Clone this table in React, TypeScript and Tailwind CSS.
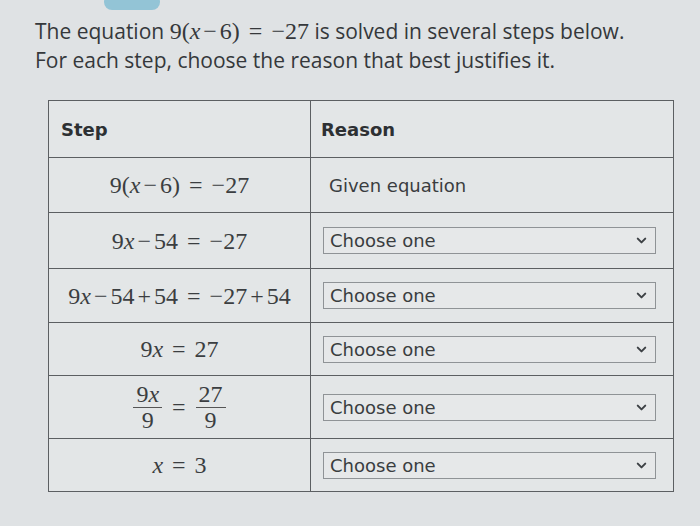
import { ChevronDown } from "lucide-react";

const serif = "font-['Liberation_Serif','Times_New_Roman',serif]";

const Choose = () => (
  <div className="flex h-[27px] w-[333px] items-center justify-between border border-[#8f9396] bg-[#e6e8e9] pl-[6px] pr-[6px] text-[18px] text-[#3a3d40]">
    <span>Choose one</span>
    <ChevronDown size={15} strokeWidth={3.2} className="text-[#3d4145]" />
  </div>
);

const X = () => <i className="italic">x</i>;
// binary operator with TeX-like spacing
const Op = ({ c }: { c: string }) => <span className="mx-[3px]">{c}</span>;
const Eq = () => <span className="mx-[9px]">=</span>;

const rows: { h: string; step: React.ReactNode; reason: React.ReactNode }[] = [
  {
    h: "h-[55px]",
    step: (
      <span>
        9(<X />
        <Op c="−" />
        6)
        <Eq />
        −27
      </span>
    ),
    reason: <span className="pl-[6px] text-[18px] text-[#3a3d40]">Given equation</span>,
  },
  {
    h: "h-[56px]",
    step: (
      <span>
        9<X />
        <Op c="−" />
        54
        <Eq />
        −27
      </span>
    ),
    reason: <Choose />,
  },
  {
    h: "h-[54px]",
    step: (
      <span>
        9<X />
        <Op c="−" />
        54
        <Op c="+" />
        54
        <Eq />
        −27
        <Op c="+" />
        54
      </span>
    ),
    reason: <Choose />,
  },
  {
    h: "h-[53px]",
    step: (
      <span>
        9<X />
        <Eq />
        27
      </span>
    ),
    reason: <Choose />,
  },
  {
    h: "h-[63px]",
    step: (
      <span className="flex items-center gap-[10px]">
        <span className="flex flex-col items-center leading-[25px]">
          <span className="px-[3px]">
            9<X />
          </span>
          <span className="h-px w-full bg-[#555]" />
          <span>9</span>
        </span>
        <span>=</span>
        <span className="flex flex-col items-center leading-[25px]">
          <span className="px-[3px]">27</span>
          <span className="h-px w-full bg-[#555]" />
          <span>9</span>
        </span>
      </span>
    ),
    reason: <Choose />,
  },
  {
    h: "h-[52px]",
    step: (
      <span>
        <X />
        <Eq />3
      </span>
    ),
    reason: <Choose />,
  },
];

export default function App() {
  return (
    <div className="relative h-[526px] w-[700px] overflow-hidden bg-[#dfe2e4] font-['DejaVu_Sans',Verdana,sans-serif]">
      <div className="absolute left-[104px] top-[-6px] h-[16px] w-[56px] rounded-[8px] bg-[#93c4d6]" />

      <div className="pl-[35px] pt-[17px] font-['Open_Sans','Liberation_Sans',sans-serif] text-[21px] leading-[29px] text-[#35383b]">
        <p>
          The equation{" "}
          <span className={`${serif} text-[24px]`}>
            9(<X />
            <Op c="−" />
            6)
            <Eq />
            −27
          </span>{" "}
          is solved in several steps below.
        </p>
        <p>For each step, choose the reason that best justifies it.</p>
      </div>

      <div className="ml-[48px] mt-[25px] w-[626px] border border-[#5c5f62] bg-[#e3e6e7]">
        <div className="flex h-[57px] border-b border-[#5c5f62]">
          <div className="flex w-[262px] items-center border-r border-[#5c5f62] pl-[12px] text-[18px] font-bold text-[#2d3033]">
            Step
          </div>
          <div className="flex flex-1 items-center pl-[10px] text-[18px] font-bold text-[#2d3033]">Reason</div>
        </div>
        {rows.map((r, i) => (
          <div key={i} className={`flex ${r.h} ${i < rows.length - 1 ? "border-b border-[#5c5f62]" : ""}`}>
            <div
              className={`flex w-[262px] items-center justify-center border-r border-[#5c5f62] ${serif} text-[24px] text-[#3b3e41]`}
            >
              {r.step}
            </div>
            <div className="flex flex-1 items-center pl-[12px]">{r.reason}</div>
          </div>
        ))}
      </div>
    </div>
  );
}
